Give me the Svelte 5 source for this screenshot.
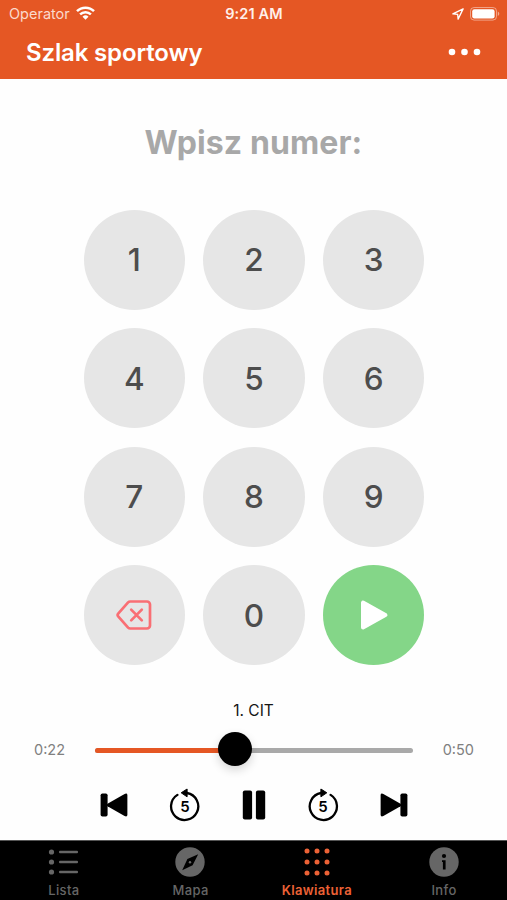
<script>
  const keys = ['1', '2', '3', '4', '5', '6', '7', '8', '9', 'back', '0', 'play'];
  const tabs = [
    { id: 'list', label: 'Lista' },
    { id: 'map', label: 'Mapa' },
    { id: 'keypad', label: 'Klawiatura' },
    { id: 'info', label: 'Info' }
  ];
  let active = $state('keypad');
  const progress = 44;
</script>

<div class="screen">
  <header>
    <div class="status">
      <div class="carrier">
        <span>Operator</span>
        <svg width="19" height="14" viewBox="0 0 19 14" fill="none" stroke="#fff" stroke-width="2.5">
          <path d="M1 5.2a12 12 0 0 1 17 0" />
          <path d="M4.1 8.4a7.7 7.7 0 0 1 10.8 0" />
          <path d="M9.5 13.8 6.5 10.7a4.3 4.3 0 0 1 6 0z" fill="#fff" stroke="none" />
        </svg>
      </div>
      <span class="clock">9:21 AM</span>
      <div class="power">
        <svg width="12" height="12" viewBox="0 0 11 11" fill="none" stroke="#fff" stroke-width="1.2" stroke-linejoin="round">
          <path d="M10.2.8.8 5.4l4.4.4.4 4.4z" />
        </svg>
        <svg width="30" height="14" viewBox="0 0 30 14">
          <rect x=".5" y=".5" width="26" height="12.6" rx="3.6" fill="none" stroke="#fff" stroke-opacity=".45" />
          <rect x="2.2" y="2.2" width="22.4" height="9.2" rx="2.2" fill="#fff" />
          <path d="M27.8 4.6c2 .8 2 3.6 0 4.4z" fill="#fff" fill-opacity=".5" />
        </svg>
      </div>
    </div>
    <div class="bar">
      <h1>Szlak sportowy</h1>
      <svg class="more" width="33" height="8" viewBox="0 0 33 8" fill="#fff">
        <circle cx="4" cy="4" r="3.3" /><circle cx="16.5" cy="4" r="3.3" /><circle cx="29" cy="4" r="3.3" />
      </svg>
    </div>
  </header>

  <main>
    <h2>Wpisz numer:</h2>
    <div class="pad">
      {#each keys as key}
        <button class="key" class:go={key === 'play'}>
          {#if key === 'back'}
            <svg width="36" height="30" viewBox="0 0 36 30" fill="none" stroke="#f96f74" stroke-width="2.7" stroke-linecap="round" stroke-linejoin="round">
              <path d="M14.2 1.5H31a3 3 0 0 1 3 3v21a3 3 0 0 1-3 3H14.2a3 3 0 0 1-2.1-.9L2.4 16.7a2.5 2.5 0 0 1 0-3.4l9.7-10.9a3 3 0 0 1 2.1-.9z" />
              <path d="m15.2 9.6 10.6 10.8M25.8 9.6 15.2 20.4" />
            </svg>
          {:else if key === 'play'}
            <svg width="28" height="30" viewBox="0 0 28 30" fill="#fff" stroke="#fff" stroke-width="4" stroke-linejoin="round">
              <path d="M3 2.6v25L25.4 15.1z" />
            </svg>
          {:else}
            {key}
          {/if}
        </button>
      {/each}
    </div>
  </main>

  <section class="player">
    <p class="track-name">1. CIT</p>
    <div class="seek">
      <span class="time">0:22</span>
      <div class="track">
        <div class="played" style="width: {progress}%"></div>
        <div class="thumb" style="left: {progress}%"></div>
      </div>
      <span class="time end">0:50</span>
    </div>
    <div class="controls">
      <svg width="28" height="24" viewBox="0 0 28 24">
        <rect x=".6" y=".4" width="7" height="23.2" rx="1.8" />
        <path d="M7.500 10.700 24.600.9Q27.200-.2 27.400 2v20q-.2 2.200-2.800 1.100L7.500 13.300Q6 12 7.500 10.700z" />
      </svg>
      <svg width="32" height="34" viewBox="0 0 32 34">
        <path d="M8.400 6.900A13.600 13.600 0 1 0 18 5" fill="none" stroke="#000" stroke-width="2.300" stroke-linecap="round" />
        <path d="m12.200 4.800 5.900-3.800v7.800z" stroke="#000" stroke-linejoin="round" />
        <text x="16" y="23.500" text-anchor="middle">5</text>
      </svg>
      <svg width="24" height="30" viewBox="0 0 24 30">
        <rect x=".8" y=".4" width="9.300" height="29.200" rx="2" /><rect x="13.900" y=".4" width="9.300" height="29.200" rx="2" />
      </svg>
      <svg width="32" height="34" viewBox="0 0 32 34">
        <path d="M23.600 6.900A13.600 13.600 0 1 1 14 5" fill="none" stroke="#000" stroke-width="2.300" stroke-linecap="round" />
        <path d="m19.800 4.800-5.900-3.800v7.800z" stroke="#000" stroke-linejoin="round" />
        <text x="16" y="23.500" text-anchor="middle">5</text>
      </svg>
      <svg width="28" height="24" viewBox="0 0 28 24">
        <rect x="20.400" y=".4" width="7" height="23.200" rx="1.800" />
        <path d="M20.500 10.700 3.400.9Q.8-.2.600 2v20q.2 2.200 2.800 1.100L20.500 13.300Q22 12 20.500 10.700z" />
      </svg>
    </div>
  </section>

  <nav>
    {#each tabs as tab}
      <button class="tab" class:active={active === tab.id} onclick={() => (active = tab.id)}>
        <svg width="30" height="30" viewBox="0 0 30 30" fill="currentColor">
          {#if tab.id === 'list'}
            {#each [5, 15, 25] as y}
              <circle cx="3.500" cy={y} r="2.600" />
              <rect x="11" y={y - 1.200} width="19" height="2.400" rx="1" />
            {/each}
          {:else if tab.id === 'map'}
            <path fill-rule="evenodd" d="M15 .3a14.700 14.700 0 1 0 0 29.400 14.700 14.700 0 0 0 0-29.400zM23.200 7.300 17.600 18.300 7.200 23.200 12.400 12.100z" />
            <circle cx="15" cy="15.200" r="1.200" />
          {:else if tab.id === 'keypad'}
            {#each [4, 15, 26] as y}
              {#each [5, 15, 25] as x}
                <circle cx={x} cy={y} r="2.500" />
              {/each}
            {/each}
          {:else}
            <circle cx="15" cy="15" r="14.700" />
            <circle cx="15" cy="9" r="2.100" fill="#000" />
            <path d="M13 13.200h3.600v9.300h-2.700v-7.400H13z" fill="#000" />
          {/if}
        </svg>
        <span>{tab.label}</span>
      </button>
    {/each}
  </nav>
</div>

<style>
  :global(body) { margin: 0; background: #fefefe; }
  .screen {
    width: 507px; height: 900px; overflow: hidden;
    display: flex; flex-direction: column;
    font-family: Inter, "Liberation Sans", sans-serif;
    background: #fefefe;
  }
  svg { display: block; flex: none; }
  button { border: 0; padding: 0; background: none; font: inherit; }
  h1, h2, p { margin: 0; }
  header { flex: none; height: 79.300px; box-sizing: border-box; background: #e55724; color: #fff; }
  .status {
    display: grid; grid-template-columns: 1fr auto 1fr; align-items: center;
    height: 27px; padding: 0 7px 0 9px; font-size: 14.500px;
  }
  .carrier { display: flex; align-items: center; gap: 6px; color: #fbd9cc; }
  .carrier svg { margin-top: -1px; }
  .clock { margin-left: -1px; font-weight: 600; letter-spacing: .15px; color: #fff0ea; }
  .power { display: flex; justify-content: flex-end; align-items: center; gap: 6px; }
  .bar { display: flex; align-items: center; justify-content: space-between; height: 50px; padding: 0 26px; }
  h1 { padding-top: 2px; font-size: 24px; font-weight: 600; line-height: 30px; letter-spacing: -0.150px; }
  main { flex: none; height: 607px; }
  h2 { padding-top: 44px; line-height: 40px; font-size: 32px; font-weight: 650; letter-spacing: .1px; text-align: center; color: #a8a8a8; }
  .pad {
    display: grid; grid-template-columns: repeat(3, 101.500px); grid-auto-rows: 100.300px;
    gap: 18.200px; justify-content: center; margin: 46.300px 0 0 1px;
  }
  .key {
    display: flex; align-items: center; justify-content: center;
    border-radius: 50%; background: #e6e6e6; color: #4d4d4d; font-size: 31.500px; font-weight: 450;
  }
  .go { background: #84d688; }
  .player { flex: 1; }
  .track-name { margin-top: 15px; text-align: center; font-size: 15.500px; line-height: 20px; color: #161616; }
  .seek { display: flex; align-items: center; justify-content: space-between; height: 40px; margin-top: 9px; padding: 0 33px 0 34px; }
  .time { width: 61px; margin-top: -2px; font-size: 14.500px; color: #808080; }
  .end { text-align: right; }
  .track { position: relative; flex: none; width: 318px; height: 4.500px; border-radius: 3px; background: #a9a9a9; }
  .played { height: 100%; border-radius: 3px; background: #e55724; }
  .thumb {
    position: absolute; top: -16px; width: 34px; height: 34px; margin-left: -17px;
    border-radius: 50%; background: #000; box-shadow: 0 4px 10px rgba(0, 0, 0, .16);
  }
  .controls { display: flex; align-items: center; justify-content: space-between; height: 34px; margin-top: 17.500px; padding: 0 99px 0 100px; }
  .controls text { font-family: Inter, sans-serif; font-size: 15px; font-weight: 600; }
  nav {
    flex: none; display: flex; box-sizing: border-box; height: 60px;
    border-top: 1px solid #555; background: #000;
  }
  .tab { flex: 1; display: flex; flex-direction: column; align-items: center; color: #666; }
  .tab svg { margin-top: 6px; }
  .tab span { margin: 5px 0 0 1px; font-size: 13px; line-height: 16px; font-weight: 500; letter-spacing: .4px; }
  .active { color: #ed6236; }
  .active span { margin-left: 0; font-weight: 600; letter-spacing: .35px; }
</style>
